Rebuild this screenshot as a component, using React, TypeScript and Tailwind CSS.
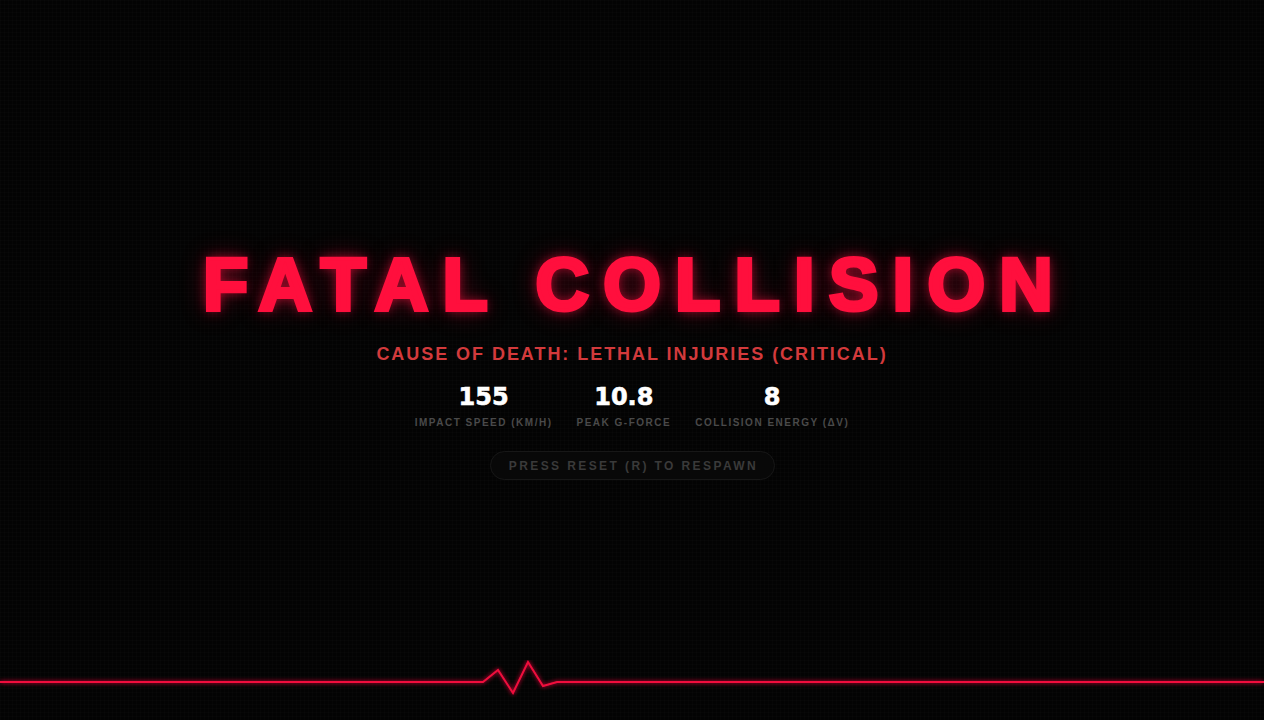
import React from "react";

type Stat = { value: string; label: string };

const stats: Stat[] = [
  { value: "155", label: "IMPACT SPEED (KM/H)" },
  { value: "10.8", label: "PEAK G-FORCE" },
  { value: "8", label: "COLLISION ENERGY (ΔV)" },
];

// heartbeat trace along the bottom edge
function Heartbeat() {
  return (
    <svg className="block w-full h-[60px]" viewBox="0 0 1264 60" preserveAspectRatio="none">
      <defs>
        <filter id="glow" x="-10%" y="-100%" width="120%" height="300%">
          <feGaussianBlur stdDeviation="2" result="b" />
          <feMerge>
            <feMergeNode in="b" />
            <feMergeNode in="SourceGraphic" />
          </feMerge>
        </filter>
      </defs>
      <polyline
        points="0,22 483,22 498,10 513,33 528,2 543,26 557,22 1264,22"
        fill="none"
        stroke="#f0103c"
        strokeWidth="2"
        strokeLinejoin="miter"
        filter="url(#glow)"
      />
    </svg>
  );
}

export default function App() {
  return (
    <div
      className="relative h-[720px] w-full overflow-hidden bg-[#030303] flex flex-col bg-[linear-gradient(rgba(255,255,255,0.012)_1px,transparent_1px),linear-gradient(90deg,rgba(255,255,255,0.012)_1px,transparent_1px)] bg-[size:4px_4px]"
      style={{ fontFamily: '"Liberation Sans", Arial, sans-serif' }}
    >
      <div className="flex-1 flex flex-col items-center pt-[248px]">
        {/* Title */}
        <h1 className="text-[74px] leading-none font-bold tracking-[14.3px] pl-[6px] text-[#ff0f3d] [-webkit-text-stroke:4px_#ff0f3d] [text-shadow:0_0_12px_rgba(255,16,64,0.7),0_0_26px_rgba(255,16,64,0.4)]">
          FATAL COLLISION
        </h1>

        {/* Cause */}
        <p className="mt-[23px] text-[18px] leading-none font-bold tracking-[1.95px] text-[#d33a3c]">
          CAUSE OF DEATH: LETHAL INJURIES (CRITICAL)
        </p>

        {/* Stats */}
        <div className="mt-[22px] flex gap-6">
          {stats.map(s => (
            <div key={s.label} className="flex flex-col items-center">
              <span className="text-[24px] leading-none font-bold text-white font-['DejaVu_Sans',sans-serif] [-webkit-text-stroke:0.6px_#ffffff]">
                {s.value}
              </span>
              <span className="mt-[9px] text-[10px] leading-none font-bold tracking-[1.5px] text-[#4a4a4a]">
                {s.label}
              </span>
            </div>
          ))}
        </div>

        {/* Respawn hint */}
        <div className="mt-[23px] h-[29px] w-[285px] rounded-full border border-[#171717] bg-[#080808] flex items-center justify-center pl-[3px]">
          <span className="text-[12px] leading-none font-bold tracking-[0.2em] text-[#3a3a3a]">
            PRESS RESET (R) TO RESPAWN
          </span>
        </div>
      </div>

      <Heartbeat />
    </div>
  );
}
